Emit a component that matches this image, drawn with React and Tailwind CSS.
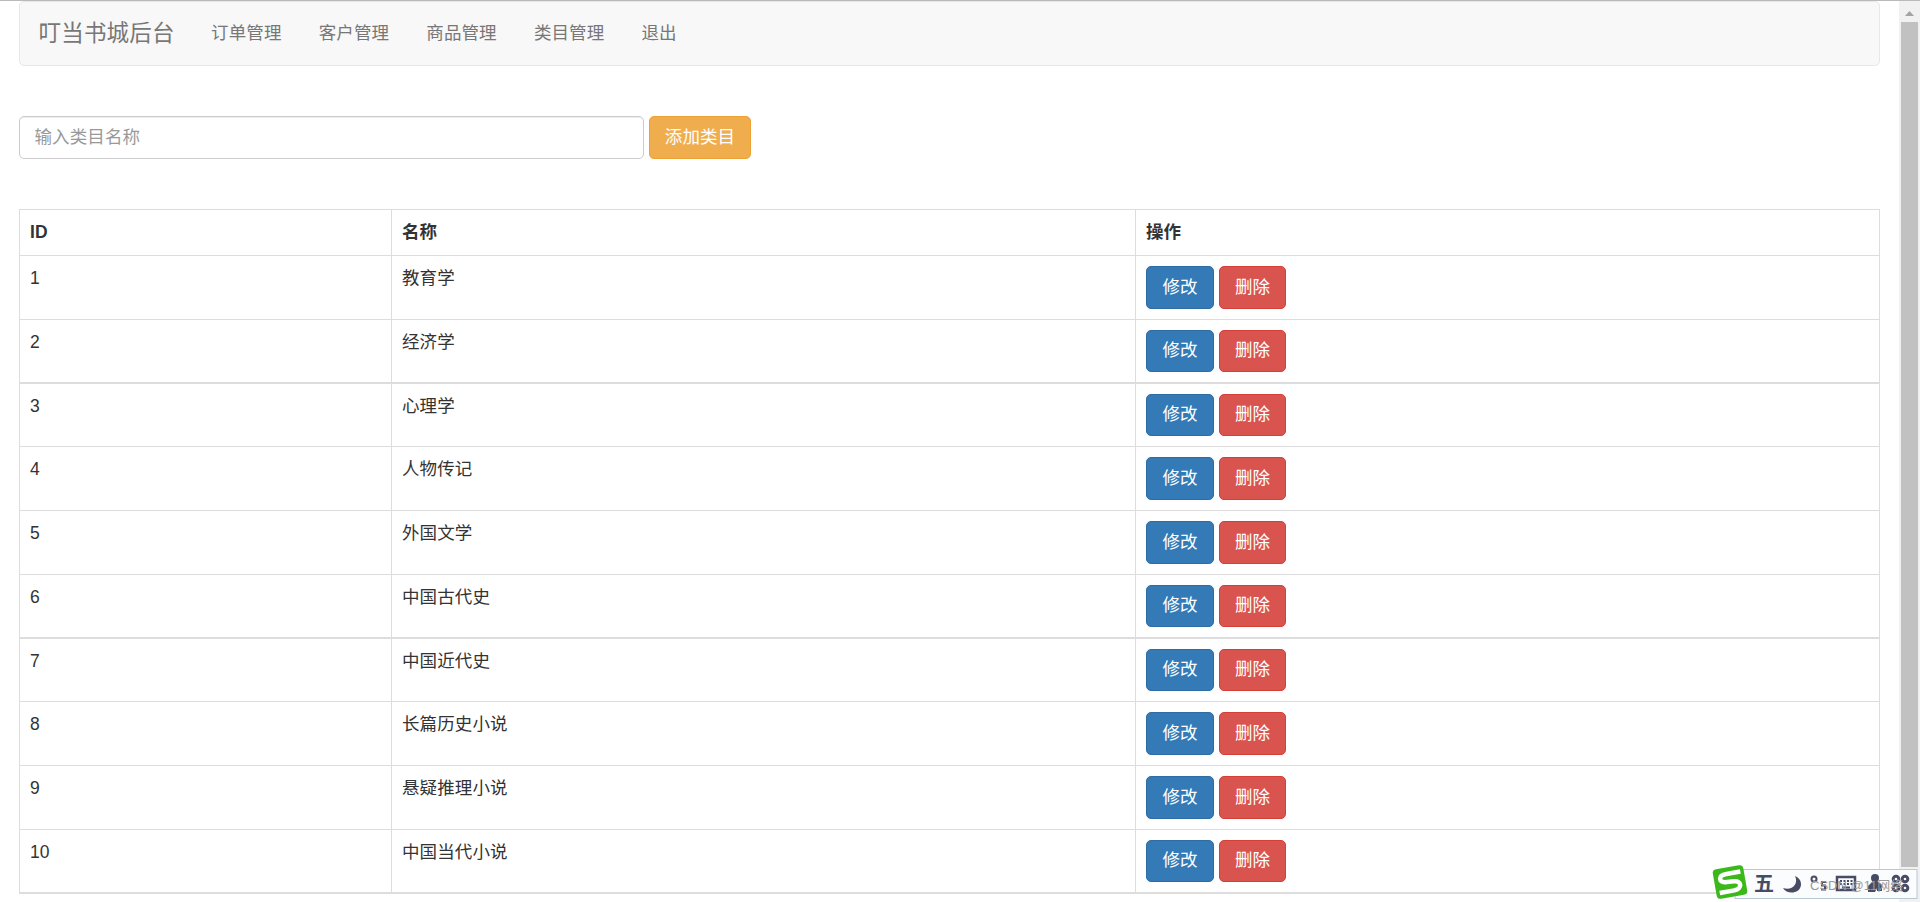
import React from 'react';

const NAV_ITEMS = ['订单管理', '客户管理', '商品管理', '类目管理', '退出'];

const CATEGORIES = [
    { id: 1, name: '教育学', row: 'h-[64px]', line: 'border-b', btn: 'h-[43px]' },
    { id: 2, name: '经济学', row: 'h-[64px]', line: 'border-b-2', btn: 'h-[42px]' },
    { id: 3, name: '心理学', row: 'h-[63px]', line: 'border-b', btn: 'h-[42px]' },
    { id: 4, name: '人物传记', row: 'h-[64px]', line: 'border-b', btn: 'h-[43px]' },
    { id: 5, name: '外国文学', row: 'h-[64px]', line: 'border-b', btn: 'h-[43px]' },
    { id: 6, name: '中国古代史', row: 'h-[64px]', line: 'border-b-2', btn: 'h-[42px]' },
    { id: 7, name: '中国近代史', row: 'h-[63px]', line: 'border-b', btn: 'h-[42px]' },
    { id: 8, name: '长篇历史小说', row: 'h-[64px]', line: 'border-b', btn: 'h-[43px]' },
    { id: 9, name: '悬疑推理小说', row: 'h-[64px]', line: 'border-b', btn: 'h-[43px]' },
    { id: 10, name: '中国当代小说', row: 'h-[64px]', line: 'border-b-2', btn: 'h-[42px]' },
];

function Navbar() {
    return (
        <nav className="h-[65px] flex items-center pl-[18.5px] bg-[#f8f8f8] border border-[#e7e7e7] rounded-[5px] text-[#777]">
            <a className="text-[22.5px] leading-[25px] tracking-[0.2px] mr-[36.4px]">叮当书城后台</a>
            <ul className="flex gap-[37.2px]">
                {NAV_ITEMS.map(item => (
                    <li key={item}>{item}</li>
                ))}
            </ul>
        </nav>
    );
}

function CategoryRow({ category }) {
    return (
        <div className={`flex border-[#ddd] ${category.row} ${category.line}`}>
            <div className="w-[371px] p-[10px]">{category.id}</div>
            <div className="w-[744px] p-[10px] border-l border-[#ddd]">{category.name}</div>
            <div className="flex-1 flex items-start gap-[5px] p-[10px] border-l border-[#ddd]">
                <button className={`w-[68px] pb-px rounded-[5px] border border-[#2e6da4] bg-[#337ab7] text-white ${category.btn}`}>修改</button>
                <button className={`w-[67px] pb-px rounded-[5px] border border-[#d43f3a] bg-[#d9534f] text-white ${category.btn}`}>删除</button>
            </div>
        </div>
    );
}

function Scrollbar() {
    return (
        <div className="w-[21px] h-[901px] bg-[#f1f1f1] flex flex-col items-center">
            <div className="h-[21px] flex items-center">
                <svg width="9" height="5" viewBox="0 0 9 5" className="mt-1">
                    <path d="M0 5 4.5 0 9 5Z" fill="#a3a3a3" />
                </svg>
            </div>
            <div className="w-[17px] h-[845px] bg-[#c1c1c1]" />
        </div>
    );
}

function InputMethodBar() {
    return (
        <div className="absolute left-[1711px] top-[863px] w-[209px] h-[38px]">
            <svg width="209" height="38" viewBox="0 0 209 38">
                <rect x="24" y="5.5" width="182" height="29" fill="#fbfcfe" stroke="#b7c9d6" />
                <g transform="rotate(-10 19 18)">
                    <rect x="3.5" y="3" width="31" height="30" rx="4" fill="#3bb91b" />
                    <path d="M31 9.5H17c-9 0-10 7.5-1 8l7 .5c8 .5 7 9-1 9H7" fill="none" stroke="#fff" strokeWidth="4.5" />
                </g>
                <path d="M84 12c4 8-3 15-12 12 4 7 17 6 18-3 0-5-2-7-6-9Z" fill="#474b64" />
                <g fill="none" stroke="#474b64" strokeWidth="2">
                    <circle cx="103" cy="15" r="2.5" />
                    <path d="M115 18h-4v3.5h3v4h-4" />
                    <rect x="126" y="13" width="18" height="13" strokeWidth="2.5" />
                    <path d="M129 17h13M129 20h13" strokeDasharray="2 1.5" />
                    <path d="M131 23.5h8" />
                </g>
                <g fill="#474b64">
                    <circle cx="164" cy="14" r="4" />
                    <path d="M162 17h4l5 4v6h-5v-3l-2 4h-7v-6Z" />
                </g>
                <g fill="none" stroke="#474b64" strokeWidth="3">
                    <circle cx="185" cy="15" r="2.8" />
                    <circle cx="194" cy="15" r="2.8" />
                    <circle cx="185" cy="24" r="2.8" />
                    <circle cx="194" cy="24" r="2.8" />
                </g>
            </svg>
            <span className="absolute left-[43px] top-[7px] text-[20px] leading-[26px] font-bold text-[#474b64]">五</span>
            <span className="absolute left-[99px] top-[11px] text-[13px] leading-[22px] tracking-normal text-[#999] whitespace-nowrap">CSDN @11网络</span>
        </div>
    );
}

export default function App() {
    return (
        <div className="relative w-[1920px] h-[902px] overflow-hidden bg-white border-t border-[#bababa] flex justify-between text-[17.5px] leading-[25px] tracking-[0.1px] text-[#333] font-['Liberation_Sans','Noto_Sans_CJK_SC',sans-serif]">
            <main className="w-[1861px] ml-[19px]">
                <Navbar />
                <form className="flex gap-[5px] mt-[50px]">
                    <input
                        className="w-[625px] h-[43px] px-[14.5px] border border-[#ccc] rounded-[5px] shadow-[inset_0_1px_1px_rgba(0,0,0,0.075)] placeholder:text-[#999]"
                        placeholder="输入类目名称"
                    />
                    <button type="button" className="w-[102px] h-[43px] rounded-[5px] border border-[#eea236] bg-[#f0ad4e] text-white">添加类目</button>
                </form>
                <div className="mt-[50px] border-x border-t border-[#ddd]">
                    <div className="h-[46px] flex border-b border-[#ddd] font-bold">
                        <div className="w-[371px] p-[10px]">ID</div>
                        <div className="w-[744px] p-[10px] border-l border-[#ddd]">名称</div>
                        <div className="flex-1 p-[10px] border-l border-[#ddd]">操作</div>
                    </div>
                    {CATEGORIES.map(category => (
                        <CategoryRow key={category.id} category={category} />
                    ))}
                </div>
            </main>
            <Scrollbar />
            <InputMethodBar />
        </div>
    );
}
